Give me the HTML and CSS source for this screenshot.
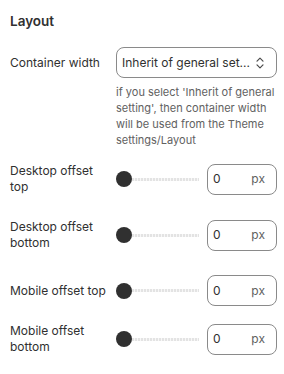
FILE: index.html
```html
<!DOCTYPE html>
<html lang="en">
<head>
<meta charset="utf-8">
<link rel="stylesheet" href="styles.css">
</head>
<body>
<section class="panel">
  <h2 class="title">Layout</h2>

  <div class="field">
    <label class="label">Container width</label>
    <div class="select">
      <span class="select-text">Inherit of general set...</span>
      <svg class="chev" width="8" height="12" viewBox="0 0 8 12" aria-hidden="true">
        <path d="M1 4.2 L4 1.2 L7 4.2" fill="none" stroke="#4a4a4a" stroke-width="1.2" stroke-linecap="round" stroke-linejoin="round"/>
        <path d="M1 7.8 L4 10.8 L7 7.8" fill="none" stroke="#4a4a4a" stroke-width="1.2" stroke-linecap="round" stroke-linejoin="round"/>
      </svg>
    </div>
  </div>
  <p class="help">if you select 'Inherit of general setting', then container width will be used from the Theme settings/Layout</p>

  <div class="row row--first">
    <label class="label">Desktop offset top</label>
    <div class="control">
      <div class="slider"><span class="thumb"></span><span class="track"></span></div>
      <div class="num"><span class="num-val">0</span><span class="num-suffix">px</span></div>
    </div>
  </div>

  <div class="row">
    <label class="label">Desktop offset bottom</label>
    <div class="control">
      <div class="slider"><span class="thumb"></span><span class="track"></span></div>
      <div class="num"><span class="num-val">0</span><span class="num-suffix">px</span></div>
    </div>
  </div>

  <div class="row">
    <label class="label">Mobile offset top</label>
    <div class="control">
      <div class="slider"><span class="thumb"></span><span class="track"></span></div>
      <div class="num"><span class="num-val">0</span><span class="num-suffix">px</span></div>
    </div>
  </div>

  <div class="row row--tight">
    <label class="label">Mobile offset bottom</label>
    <div class="control">
      <div class="slider"><span class="thumb"></span><span class="track"></span></div>
      <div class="num"><span class="num-val">0</span><span class="num-suffix">px</span></div>
    </div>
  </div>
</section>
</body>
</html>
```
FILE: styles.css
```css
* { box-sizing: border-box; }
html, body { margin: 0; padding: 0; background: #ffffff; }
body {
  font-family: Inter, "Noto Sans", "Liberation Sans", sans-serif;
  color: #303030;
  font-size: 12px;
  line-height: 16px;
}
.panel {
  width: 284px;
  padding: 11px 7px 0 10px;
}
.title {
  margin: 0;
  font-size: 13.5px;
  line-height: 20px;
  font-weight: 600;
  color: #303030;
}
.field {
  margin-top: 16px;
  display: flex;
  align-items: center;
}
.label {
  width: 106px;
  flex: 0 0 106px;
  padding-right: 4px;
  font-size: 12px;
  line-height: 16px;
  color: #303030;
}
.select {
  flex: 1;
  height: 31px;
  border: 1px solid #8a8a8a;
  border-radius: 8px;
  display: flex;
  align-items: center;
  padding: 0 12px 0 5px;
  justify-content: space-between;
}
.select-text {
  font-size: 12px;
  color: #303030;
  white-space: nowrap;
}
.chev { display: block; }
.help {
  margin: 6px 0 0 106px;
  font-size: 11px;
  line-height: 16px;
  color: #616161;
}
.row {
  margin-top: 24px;
  display: flex;
  align-items: center;
  min-height: 31px;
}
.row--first { margin-top: 15px; }
.row--tight { margin-top: 17px; }
.control {
  flex: 1;
  display: flex;
  align-items: center;
  gap: 8px;
}
.slider {
  flex: 1;
  display: flex;
  align-items: center;
  height: 16px;
}
.thumb {
  width: 16px;
  height: 16px;
  border-radius: 50%;
  background: #303030;
  flex: 0 0 16px;
}
.track {
  flex: 1;
  height: 3px;
  background: repeating-linear-gradient(to right, #e3e3e3 0 2px, #f7f7f7 2px 3px);
}
.num {
  width: 70px;
  height: 31px;
  border: 1px solid #8a8a8a;
  border-radius: 8px;
  display: flex;
  align-items: center;
  justify-content: space-between;
  padding: 0 11px 0 5px;
}
.num-val { color: #303030; font-size: 12px; }
.num-suffix { color: #616161; font-size: 12px; }
```
